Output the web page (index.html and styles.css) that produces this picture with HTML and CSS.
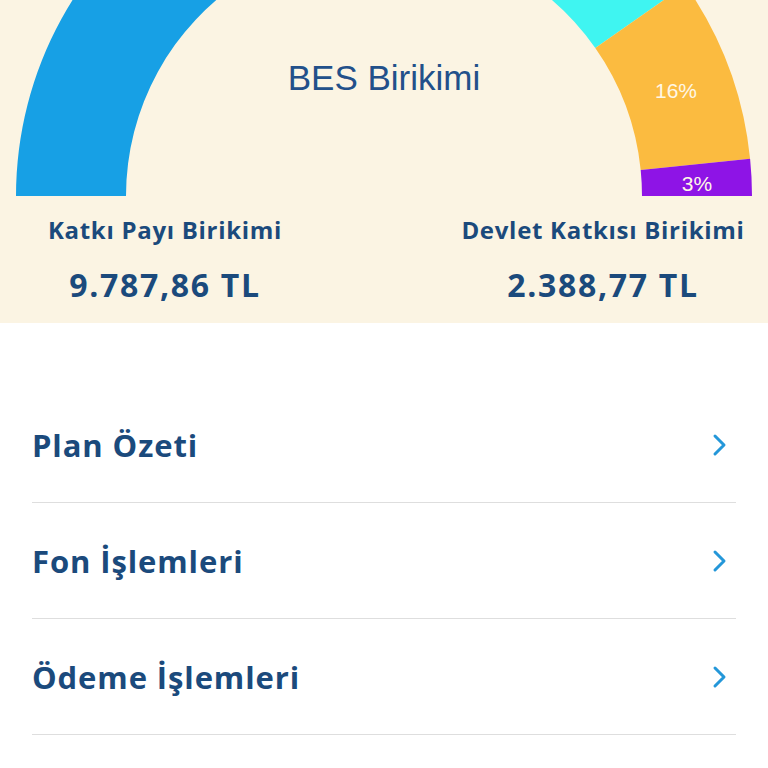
FILE: index.html
```html
<!DOCTYPE html>
<html lang="tr">
<head>
<meta charset="utf-8">
<link rel="stylesheet" href="styles.css">
</head>
<body>
<section class="summary">
  <div class="chart">
    <svg class="donut" width="768" height="196" viewBox="0 0 768 196">
      <path fill="#17a0e5" d="M 539.5 -137.5 A 368 368 0 0 0 16 196 L 126 196 A 258 258 0 0 1 493 -37.8 Z"/>
      <path fill="#3ff5f1" d="M 685.4 -15.1 A 368 368 0 0 0 539.5 -137.5 L 493 -37.8 A 258 258 0 0 1 595.3 48 Z"/>
      <path fill="#fbbb40" d="M 750.1 158.8 A 368 368 0 0 0 685.4 -15.1 L 595.3 48 A 258 258 0 0 1 640.7 169.9 Z"/>
      <path fill="#8e14e6" d="M 752 196 A 368 368 0 0 0 750.1 158.8 L 640.7 169.9 A 258 258 0 0 1 642 196 Z"/>
      <text class="pct" x="676" y="98" text-anchor="middle">16%</text>
      <text class="pct" x="697" y="191" text-anchor="middle">3%</text>
    </svg>
    <h1 class="chart-title">BES Birikimi</h1>
  </div>
  <div class="stats">
    <div class="stat">
      <div class="stat-label">Katkı Payı Birikimi</div>
      <div class="stat-value">9.787,86 TL</div>
    </div>
    <div class="stat">
      <div class="stat-label">Devlet Katkısı Birikimi</div>
      <div class="stat-value">2.388,77 TL</div>
    </div>
  </div>
</section>
<ul class="menu">
  <li class="menu-item"><span class="menu-text">Plan Özeti</span><svg class="chev" width="16" height="24" viewBox="0 0 16 24"><path d="M3 3 L12 12 L3 21" fill="none" stroke="#2497d9" stroke-width="3" stroke-linecap="round" stroke-linejoin="round"/></svg></li>
  <li class="menu-item"><span class="menu-text">Fon İşlemleri</span><svg class="chev" width="16" height="24" viewBox="0 0 16 24"><path d="M3 3 L12 12 L3 21" fill="none" stroke="#2497d9" stroke-width="3" stroke-linecap="round" stroke-linejoin="round"/></svg></li>
  <li class="menu-item"><span class="menu-text">Ödeme İşlemleri</span><svg class="chev" width="16" height="24" viewBox="0 0 16 24"><path d="M3 3 L12 12 L3 21" fill="none" stroke="#2497d9" stroke-width="3" stroke-linecap="round" stroke-linejoin="round"/></svg></li>
</ul>
</body>
</html>
```
FILE: styles.css
```css
html, body {
  margin: 0;
  padding: 0;
  background: #ffffff;
}
body {
  font-family: "Open Sans", "Noto Sans", sans-serif;
  color: #1b4a7c;
}
.summary {
  background: #fbf4e3;
  height: 323px;
  overflow: hidden;
}
.chart {
  position: relative;
  height: 196px;
}
.donut {
  display: block;
}
.pct {
  font-family: "Liberation Sans", Arial, sans-serif;
  font-size: 21px;
  fill: #fff7e6;
}
.chart-title {
  position: absolute;
  left: 0;
  right: 0;
  top: 55px;
  margin: 0;
  text-align: center;
  font-family: "Liberation Sans", Arial, sans-serif;
  font-weight: normal;
  font-size: 35px;
  line-height: 46px;
  color: #22508a;
}
.stats {
  display: flex;
  justify-content: space-between;
  padding-top: 18px;
}
.stat {
  width: 330px;
  text-align: center;
}
.stat-label {
  font-weight: 700;
  font-size: 24px;
  line-height: 32px;
  letter-spacing: 0.7px;
}
.stat-value {
  font-weight: 700;
  font-size: 32px;
  line-height: 40px;
  margin-top: 19px;
  letter-spacing: 1.7px;
}
.menu {
  list-style: none;
  margin: 0 32px;
  padding: 64px 0 0;
}
.menu-item {
  display: flex;
  justify-content: space-between;
  align-items: center;
  height: 115px;
  border-bottom: 1px solid #dedede;
}
.menu-text {
  font-weight: 700;
  font-size: 31px;
  letter-spacing: 0.9px;
}
.chev {
  margin-right: 8px;
}
```
